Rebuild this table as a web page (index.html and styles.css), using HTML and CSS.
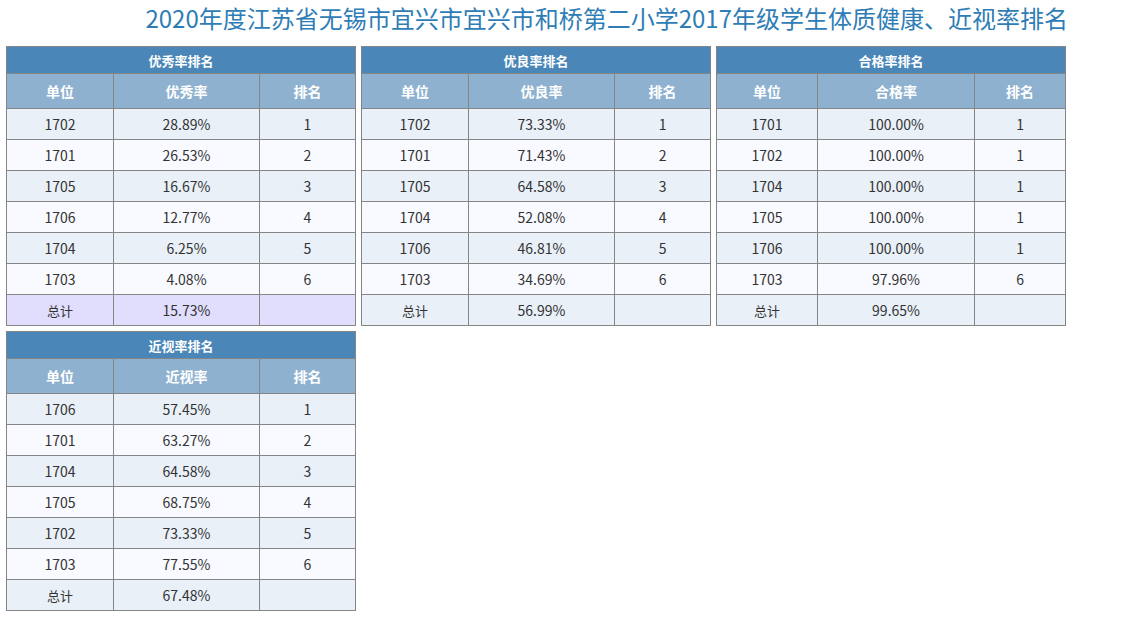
FILE: index.html
```html
<!DOCTYPE html>
<html lang="zh">
<head>
<meta charset="utf-8">
<title>排名</title>
<link rel="stylesheet" href="styles.css">
</head>
<body>
<div class="page">
  <h1 class="title">2020年度江苏省无锡市宜兴市宜兴市和桥第二小学2017年级学生体质健康、近视率排名</h1>
  <div class="grid">
    <table class="rank t-a">
      <colgroup><col class="c1"><col class="c2"><col class="c3"></colgroup>
      <tr class="cap"><th colspan="3">优秀率排名</th></tr>
      <tr class="head"><th>单位</th><th>优秀率</th><th>排名</th></tr>
      <tr class="odd"><td>1702</td><td>28.89%</td><td>1</td></tr>
      <tr class="even"><td>1701</td><td>26.53%</td><td>2</td></tr>
      <tr class="odd"><td>1705</td><td>16.67%</td><td>3</td></tr>
      <tr class="even"><td>1706</td><td>12.77%</td><td>4</td></tr>
      <tr class="odd"><td>1704</td><td>6.25%</td><td>5</td></tr>
      <tr class="even"><td>1703</td><td>4.08%</td><td>6</td></tr>
      <tr class="total hl"><td class="sm">总计</td><td>15.73%</td><td></td></tr>
    </table>
    <table class="rank t-a">
      <colgroup><col class="c1"><col class="c2"><col class="c3"></colgroup>
      <tr class="cap"><th colspan="3">优良率排名</th></tr>
      <tr class="head"><th>单位</th><th>优良率</th><th>排名</th></tr>
      <tr class="odd"><td>1702</td><td>73.33%</td><td>1</td></tr>
      <tr class="even"><td>1701</td><td>71.43%</td><td>2</td></tr>
      <tr class="odd"><td>1705</td><td>64.58%</td><td>3</td></tr>
      <tr class="even"><td>1704</td><td>52.08%</td><td>4</td></tr>
      <tr class="odd"><td>1706</td><td>46.81%</td><td>5</td></tr>
      <tr class="even"><td>1703</td><td>34.69%</td><td>6</td></tr>
      <tr class="total"><td class="sm">总计</td><td>56.99%</td><td></td></tr>
    </table>
    <table class="rank t-b">
      <colgroup><col class="c1"><col class="c2"><col class="c3"></colgroup>
      <tr class="cap"><th colspan="3">合格率排名</th></tr>
      <tr class="head"><th>单位</th><th>合格率</th><th>排名</th></tr>
      <tr class="odd"><td>1701</td><td>100.00%</td><td>1</td></tr>
      <tr class="even"><td>1702</td><td>100.00%</td><td>1</td></tr>
      <tr class="odd"><td>1704</td><td>100.00%</td><td>1</td></tr>
      <tr class="even"><td>1705</td><td>100.00%</td><td>1</td></tr>
      <tr class="odd"><td>1706</td><td>100.00%</td><td>1</td></tr>
      <tr class="even"><td>1703</td><td>97.96%</td><td>6</td></tr>
      <tr class="total"><td class="sm">总计</td><td>99.65%</td><td></td></tr>
    </table>
    <table class="rank t-a">
      <colgroup><col class="c1"><col class="c2"><col class="c3"></colgroup>
      <tr class="cap"><th colspan="3">近视率排名</th></tr>
      <tr class="head"><th>单位</th><th>近视率</th><th>排名</th></tr>
      <tr class="odd"><td>1706</td><td>57.45%</td><td>1</td></tr>
      <tr class="even"><td>1701</td><td>63.27%</td><td>2</td></tr>
      <tr class="odd"><td>1704</td><td>64.58%</td><td>3</td></tr>
      <tr class="even"><td>1705</td><td>68.75%</td><td>4</td></tr>
      <tr class="odd"><td>1702</td><td>73.33%</td><td>5</td></tr>
      <tr class="even"><td>1703</td><td>77.55%</td><td>6</td></tr>
      <tr class="total"><td class="sm">总计</td><td>67.48%</td><td></td></tr>
    </table>
  </div>
</div>
</body>
</html>
```
FILE: styles.css
```css
* { box-sizing: border-box; }
html, body { margin: 0; padding: 0; background: #fff; }
body {
  font-family: "Noto Sans CJK SC", "Noto Sans", sans-serif;
  color: #333;
}
.page {
  padding: 0 6px;
}
.title {
  width: 1062px;
  margin: 0;
  height: 46px;
  padding-top: 1px;
  text-align: right;
  font-size: 24px;
  font-weight: normal;
  line-height: 34px;
  color: #2f7db6;
}
.grid {
  width: 1070px;
  display: flex;
  flex-wrap: wrap;
  gap: 5px 5px;
}
.rank {
  width: 349px;
  border-collapse: collapse;
  table-layout: fixed;
  font-size: 14px;
}
.rank th, .rank td {
  border: 1px solid #858585;
  text-align: center;
  padding: 0;
}
.cap th {
  background: #4a86b8;
  color: #fff;
  height: 27px;
  font-size: 13px;
  font-weight: bold;
}
.head th {
  background: #8eb1d0;
  color: #fff;
  height: 35px;
  font-size: 14px;
  font-weight: bold;
}
.rank td {
  height: 31px;
  color: #333;
}
.odd td { background: #e9f0f8; }
.even td { background: #f8faff; }
.total td { background: #e9f0f8; }
.total.hl td { background: #e1ddfd; }
.sm { font-size: 13px; }
.t-a .c1 { width: 107px; }
.t-a .c2 { width: 146px; }
.t-a .c3 { width: 96px; }
.t-b .c1 { width: 101px; }
.t-b .c2 { width: 157px; }
.t-b .c3 { width: 91px; }
```
